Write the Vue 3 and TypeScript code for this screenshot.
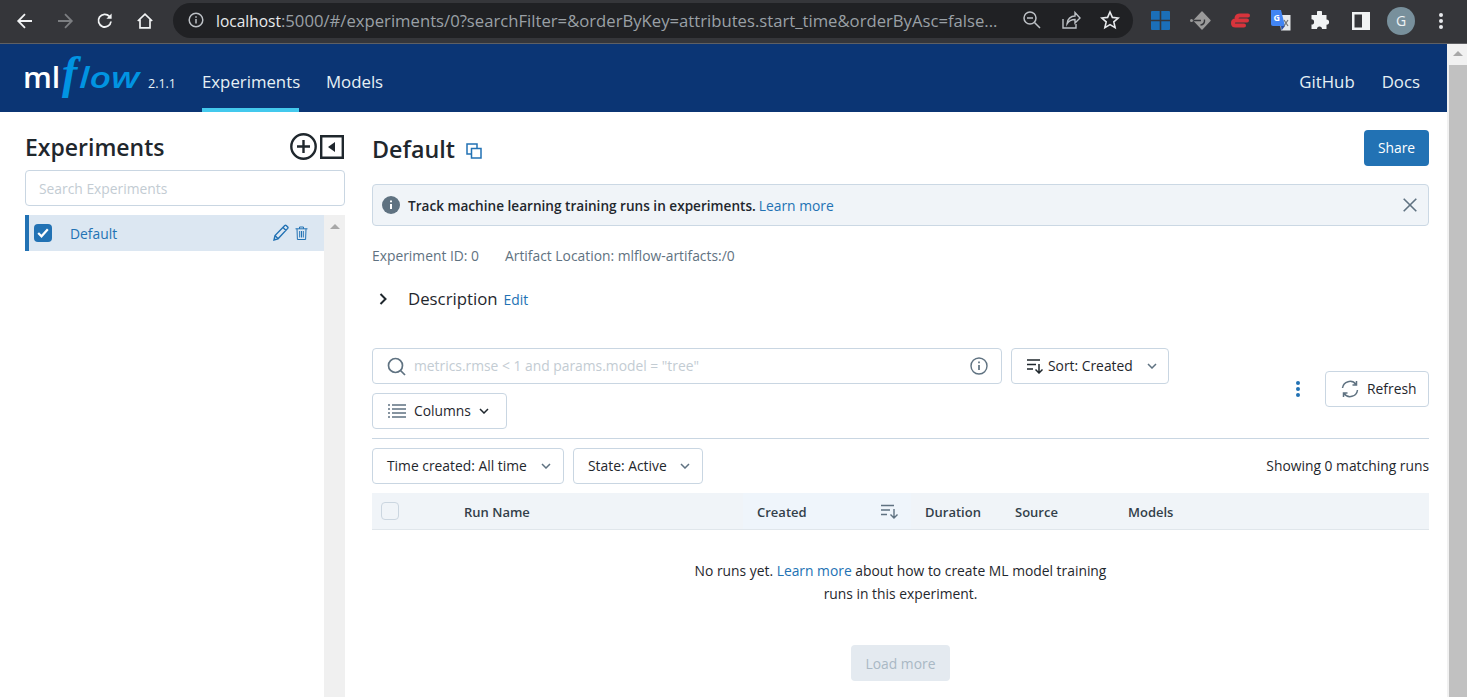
<script setup lang="ts">
const headers: { label: string; width: number; pad: number }[] = [
  { label: 'Duration', width: 90, pad: 14 },
  { label: 'Source', width: 113, pad: 14 },
  { label: 'Models', width: 120, pad: 14 },
]
</script>

<template>
  <div class="window">
    <header class="chrome">
      <button class="cbtn first" aria-label="Back">
        <svg width="18" height="18" viewBox="0 0 18 18" fill="none" stroke="#f1f3f4" stroke-width="1.8"><path d="M16 9H2.500M9 2.200 2.200 9 9 15.800" /></svg>
      </button>
      <button class="cbtn" aria-label="Forward">
        <svg width="18" height="18" viewBox="0 0 18 18" fill="none" stroke="#7c7e81" stroke-width="1.8"><path d="M2 9h13.500M9 2.200 15.800 9 9 15.800" /></svg>
      </button>
      <button class="cbtn" aria-label="Reload">
        <svg width="18" height="18" viewBox="0 0 18 18" fill="none" stroke="#f1f3f4" stroke-width="1.8"><path d="M15 9.500A6.300 6.300 0 1 1 13.400 4.400" /><path d="M15.600 1.600v5.200h-5.200" fill="#f1f3f4" stroke="none" /></svg>
      </button>
      <button class="cbtn" aria-label="Home">
        <svg width="18" height="18" viewBox="0 0 18 18" fill="none" stroke="#f1f3f4" stroke-width="1.7"><path d="M1.800 9 9 2.200 16.200 9M4 7.500v8.300h10V7.500" /></svg>
      </button>
      <div class="omnibox">
        <svg class="omni-info" width="16" height="16" viewBox="0 0 16 16" fill="none" stroke="#bdc1c6" stroke-width="1.5"><circle cx="8" cy="8" r="6.800" /><path d="M8 7v4.600M8 4.200v1.600" /></svg>
        <span class="url"><span class="host">localhost</span>:5000/#/experiments/0?searchFilter=&amp;orderByKey=attributes.start_time&amp;orderByAsc=false...</span>
        <svg class="omni-icon zoomi" width="20" height="20" viewBox="0 0 20 20" fill="none" stroke="#bdc1c6" stroke-width="1.5"><circle cx="8" cy="8" r="6" /><path d="M5 8h6M12.500 12.500 18 18" /></svg>
        <svg class="omni-icon" width="20" height="20" viewBox="0 0 20 20" fill="none" stroke="#bdc1c6" stroke-width="1.4"><path d="M2 9v9h13v-4M6 14c0-5 4-8 8-8V2.500L19 8l-5 5V9.500c-3 0-6 1-8 4.500Z" /></svg>
        <svg class="omni-icon" width="20" height="20" viewBox="0 0 20 20" fill="none" stroke="#e8eaed" stroke-width="1.6"><path d="m10 2 2.400 5.400 5.800.6-4.400 3.900 1.300 5.700-5.100-3-5.100 3 1.300-5.700L1.800 8l5.800-.6Z" /></svg>
      </div>
      <div class="exts">
        <svg width="21" height="21" viewBox="0 0 21 21"><path fill="#1b6fb8" d="M1 2q0-1 1-1h7.700v8.700H1ZM11.300 1H19q1 0 1 1v7.700h-8.700ZM1 11.300h8.700V20H2q-1 0-1-1ZM11.300 11.300H20V19q0 1-1 1h-7.700Z" /></svg>
        <svg width="21" height="21" viewBox="0 0 21 21"><path fill="#9a9a9a" d="M11.500 1.500q.5-.4 1 0l8 8.500q.5.500 0 1l-8 8.500q-.5.400-1 0l-8-8.500q-.5-.5 0-1Z" /><circle cx="1.500" cy="10.500" r="1.500" fill="#9a9a9a" /><path d="M3.500 10.500h7.500M10.500 15q4.500-.5 4-5.500" fill="none" stroke="#35363a" stroke-width="1.400" /></svg>
        <svg width="21" height="21" viewBox="0 0 21 21" fill="none" stroke="#d8343c" stroke-width="4" stroke-linecap="round" stroke-linejoin="round"><path d="M18 5.500H10Q7 5.500 6.500 8M17 10.500H5.500Q3 10.500 3 13 3 15.500 5.500 15.500H14" /></svg>
        <svg width="21" height="21" viewBox="0 0 21 21"><path fill="#e6e8ea" d="M9 5h11.500v15.500H11Z" /><path fill="#4285f4" d="M1 0h10l4 16H3q-2 0-2-2Z" /><path fill="#2c4fa3" d="m11 16 4 0-3.500 4.500Z" /><text x="3.500" y="11" class="g-text">G</text><path d="m14 10 4 6M18 10l-4 6" stroke="#6f7274" stroke-width="1.200" /></svg>
        <svg width="20" height="20" viewBox="0 0 20 20"><path fill="#f1f3f4" d="M7 1.500a2.500 2.500 0 0 1 5 0V4h4.500v4.500a2.600 2.600 0 0 1 0 5.200V18H12a2.500 2.500 0 0 0-5 0H1.500v-4.500a2.600 2.600 0 0 0 0-5.200V4H7Z" /></svg>
        <svg class="panel" width="18" height="18" viewBox="0 0 18 18"><path fill="#f1f3f4" d="M0 0h18v18H0Z" /><path fill="#35363a" d="M2.500 2.500h7.500v13H2.500Z" /></svg>
        <span class="avatar">G</span>
        <svg class="dots" width="4" height="16" viewBox="0 0 4 16" fill="#e8eaed"><circle cx="2" cy="2" r="2" /><circle cx="2" cy="8" r="2" /><circle cx="2" cy="14" r="2" /></svg>
      </div>
    </header>

    <div class="viewport">
      <div class="page">
        <nav class="topnav">
          <a class="logo">
            <span class="ml">ml</span><span class="f">f</span><span class="low">low</span>
            <span class="version">2.1.1</span>
          </a>
          <a class="navlink active">Experiments</a>
          <a class="navlink">Models</a>
          <span class="nav-space"></span>
          <a class="navlink">GitHub</a>
          <a class="navlink">Docs</a>
        </nav>

        <main class="body">
          <aside class="sidebar">
            <div class="side-head">
              <h1 class="side-title">Experiments</h1>
              <svg class="plus" width="27" height="27" viewBox="0 0 27 27" fill="none" stroke="#1f272d" stroke-width="2.400"><circle cx="13.500" cy="13.500" r="12.200" /><path d="M7 13.500h13M13.500 7v13" /></svg>
              <svg class="collapse" width="24" height="24" viewBox="0 0 24 24"><path fill="none" stroke="#1f272d" stroke-width="2.400" d="M1.200 1.200h21.600v21.600H1.200Z" /><path fill="#1f272d" d="M15 7v10l-7-5Z" /></svg>
            </div>
            <div class="side-search">Search Experiments</div>
            <div class="side-list">
              <div class="side-items">
                <div class="side-item">
                  <span class="check">
                    <svg width="12" height="10" viewBox="0 0 12 10" fill="none" stroke="#fff" stroke-width="2.200"><path d="m1.200 5 3.300 3.300 6.300-7" /></svg>
                  </span>
                  <span class="side-name">Default</span>
                  <svg class="pencil" width="16" height="17" viewBox="0 0 16 17" fill="none" stroke="#2272b4" stroke-width="1.400"><path d="M1 16 2 11.500 11.800 1.500q.7-.6 1.400 0l1.500 1.500q.6.700 0 1.400L5 14.800ZM2 11.500 5 14.800M10 3.400l3 3" /></svg>
                  <svg class="trash" width="13" height="14" viewBox="0 0 13 14" fill="none" stroke="#2272b4" stroke-width="1"><path d="M0.500 2.800h12M4.500 2.800V1h4v1.800M2 2.800l.4 10.700h8.200l.4-10.700M4.700 5v6.500M6.500 5v6.500M8.300 5v6.500" /></svg>
                </div>
              </div>
              <div class="side-scroll"><span class="tri"></span></div>
            </div>
          </aside>

          <section class="content">
            <div class="title-row">
              <h2 class="exp-title">Default</h2>
              <svg class="copy" width="16" height="16" viewBox="0 0 16 16" fill="none" stroke="#2272b4" stroke-width="1.500"><path d="M5.500 5.500h9.500v9.500H5.500ZM5 11H1V1h10v4" /></svg>
              <button class="share">Share</button>
            </div>

            <div class="banner">
              <svg width="18" height="18" viewBox="0 0 18 18"><circle cx="9" cy="9" r="9" fill="#5f7281" /><path d="M9 8v5M9 4.500v1.800" stroke="#fff" stroke-width="2" /></svg>
              <span class="banner-text">Track machine learning training runs in experiments.</span>
              <a class="link">Learn more</a>
              <svg class="close" width="14" height="14" viewBox="0 0 14 14" fill="none" stroke="#5f7281" stroke-width="1.600"><path d="m.7.700 12.600 12.600M13.300.700.700 13.300" /></svg>
            </div>

            <div class="meta"><span>Experiment ID: 0</span><span>Artifact Location: mlflow-artifacts:/0</span></div>

            <div class="desc">
              <svg width="9" height="12" viewBox="0 0 9 12" fill="none" stroke="#1f272d" stroke-width="2"><path d="m1.500 1 5 5-5 5" /></svg>
              <span class="desc-label">Description</span>
              <a class="link edit">Edit</a>
            </div>

            <div class="controls">
              <div class="control-left">
                <div class="box searchbox">
                  <svg width="19" height="19" viewBox="0 0 19 19" fill="none" stroke="#5f7281" stroke-width="1.700"><circle cx="8.500" cy="8.500" r="7" /><path d="m13.500 13.500 4.500 4.500" /></svg>
                  <span class="placeholder">metrics.rmse &lt; 1 and params.model = "tree"</span>
                  <svg class="hint" width="18" height="18" viewBox="0 0 18 18" fill="none" stroke="#5f7281" stroke-width="1.400"><circle cx="9" cy="9" r="8" /><path d="M9 8v5M9 4.500v1.800" stroke-width="1.700" /></svg>
                </div>
                <div class="box sort">
                  <svg width="17" height="16" viewBox="0 0 17 16" fill="none" stroke="#1f272d" stroke-width="1.500"><path d="M0 2h13M0 6.500h9M0 11h6M12 6v9M8.500 11.500 12 15l3.500-3.500" /></svg>
                  <span>Sort: Created</span>
                  <svg class="chev" width="10" height="6" viewBox="0 0 10 6" fill="none" stroke="#5f7281" stroke-width="1.500"><path d="m1 1 4 4 4-4" /></svg>
                </div>
                <div class="box columns">
                  <svg width="18" height="14" viewBox="0 0 18 14" fill="none" stroke="#5f7281" stroke-width="1.400"><path d="M0 1h2M0 5h2M0 9h2M0 13h2M4 1h14M4 5h14M4 9h14M4 13h14" /></svg>
                  <span>Columns</span>
                  <svg class="chev" width="10" height="6" viewBox="0 0 10 6" fill="none" stroke="#1f272d" stroke-width="1.500"><path d="m1 1 4 4 4-4" /></svg>
                </div>
              </div>
              <svg class="kebab" width="4" height="16" viewBox="0 0 4 16" fill="#2272b4"><circle cx="2" cy="2" r="2" /><circle cx="2" cy="8" r="2" /><circle cx="2" cy="14" r="2" /></svg>
              <div class="box refresh">
                <svg width="18" height="18" viewBox="0 0 18 18" fill="none" stroke="#5f7281" stroke-width="1.500"><path d="M1.500 8A7.500 7.500 0 0 1 15 4.500M16.500 10A7.500 7.500 0 0 1 3 13.500M15.500 1v4h-4M2.500 17v-4h4" /></svg>
                <span>Refresh</span>
              </div>
            </div>

            <div class="filters">
              <div class="box filter time"><span>Time created: All time</span><svg class="chev" width="10" height="6" viewBox="0 0 10 6" fill="none" stroke="#5f7281" stroke-width="1.500"><path d="m1 1 4 4 4-4" /></svg></div>
              <div class="box filter state"><span>State: Active</span><svg class="chev" width="10" height="6" viewBox="0 0 10 6" fill="none" stroke="#5f7281" stroke-width="1.500"><path d="m1 1 4 4 4-4" /></svg></div>
              <span class="count">Showing 0 matching runs</span>
            </div>

            <div class="thead">
              <div class="th-select"><span class="th-check"></span></div>
              <div class="th-name">Run Name</div>
              <div class="th-created">
                <span>Created</span>
                <svg width="18" height="15" viewBox="0 0 18 15" fill="none" stroke="#5f7281" stroke-width="1.400"><path d="M0 1.500h13M0 6h9M0 10.500h6M13 5v9M9.500 10.500 13 14l3.500-3.500" /></svg>
              </div>
              <div v-for="h in headers" :key="h.label" class="th" :style="{ width: h.width + 'px', paddingLeft: h.pad + 'px' }">{{ h.label }}</div>
            </div>

            <div class="empty">
              <p>No runs yet. <a class="link">Learn more</a> about how to create ML model training runs in this experiment.</p>
            </div>
            <div class="more"><button class="load">Load more</button></div>
          </section>
        </main>
      </div>
      <div class="vscroll">
        <span class="vtri"></span>
        <span class="vthumb"></span>
      </div>
    </div>
  </div>
</template>

<style>
html, body { margin: 0; height: 100%; overflow: hidden; background: #fff; }
</style>

<style scoped>
* { box-sizing: border-box; }
.window { height: 697px; display: flex; flex-direction: column; font-family: "Open Sans", "Liberation Sans", sans-serif; font-size: 13.850px; color: #1f272d; overflow: hidden; }
.chrome { height: 44px; flex: none; background: #35363a; border-bottom: 1px solid #5f6063; display: flex; align-items: center; padding-bottom: 2px; }
.cbtn { width: 18px; height: 18px; padding: 0; margin-left: 22px; background: none; border: 0; display: flex; }
.cbtn.first { margin-left: 16px; }
.omnibox { width: 960px; height: 35px; margin-left: 19px; margin-top: -1px; background: #202124; border-radius: 18px; display: flex; align-items: center; padding-left: 15px; }
.omni-info { flex: none; }
.url { margin-left: 12px; width: 783px; font-family: "Open Sans", "Liberation Sans", sans-serif; font-size: 16.680px; color: #9aa0a6; white-space: nowrap; overflow: hidden; }
.host { color: #e8eaed; font-size: 15.500px; }
.omni-icon { flex: none; margin-left: 19px; }
.omni-icon.zoomi { margin-left: 23px; }
.exts { display: flex; align-items: center; margin-left: 17px; gap: 19px; }
.g-text { font-family: "Open Sans", sans-serif; font-size: 9px; font-weight: 700; fill: #fff; }
.panel { margin-left: 3px; }
.avatar { width: 28px; height: 28px; border-radius: 50%; background: #78909c; color: #eef2f4; font-size: 14px; display: flex; align-items: center; justify-content: center; margin-left: -2px; }
.dots { margin-left: 5px; }
.viewport { flex: 1; display: flex; min-height: 0; }
.page { flex: 1; min-width: 0; display: flex; flex-direction: column; }
.topnav { height: 68px; flex: none; background: #0b3574; display: flex; align-items: stretch; color: #fff; padding-left: 25px; padding-right: 27px; }
.logo { width: 177px; display: flex; align-items: baseline; padding-top: 13px; white-space: nowrap; line-height: 32px; }
.ml { display: inline-block; width: 37px; margin-left: -2px; margin-right: 2px; font-size: 28px; font-weight: 600; color: #fff; transform: scaleX(1.080); transform-origin: left; }
.f { display: inline-block; width: 17px; font-family: "Liberation Serif", serif; font-style: italic; font-weight: 700; font-size: 46px; color: #0194e2; line-height: 32px; }
.low { display: inline-block; width: 62px; font-style: italic; font-weight: 600; font-size: 28px; color: #0194e2; transform: scaleX(1.350); transform-origin: left; }
.version { font-size: 12.500px; margin-left: 7px; color: #e6f1f5; }
.navlink { font-size: 16.800px; line-height: 76px; height: 68px; color: #e6f1f5; margin-right: 27px; }
.navlink.active { border-bottom: 4px solid #43c9ed; width: 97px; white-space: nowrap; }
.navlink:last-child { margin-right: 0; }
.nav-space { flex: 1; }
.body { flex: 1; min-height: 0; display: flex; padding-left: 25px; padding-right: 18px; }
.sidebar { width: 320px; flex: none; display: flex; flex-direction: column; padding-top: 20px; }
.side-head { height: 28px; display: flex; align-items: center; }
.side-title { margin: 1px 0 0; flex: 1; font-size: 23px; font-weight: 600; color: #1f272d; line-height: 28px; }
.plus { flex: none; }
.collapse { flex: none; margin: 1px 1px 0 3px; }
.side-search { height: 36px; margin-top: 10px; border: 1px solid #c9d6e2; border-radius: 4px; padding-left: 13px; line-height: 35px; color: #c3ccd3; }
.side-list { flex: 1; display: flex; margin-top: 9px; min-height: 0; }
.side-items { flex: 1; }
.side-item { height: 36px; background: #dce7f2; border-left: 4px solid #2272b4; display: flex; align-items: center; padding-left: 5px; }
.check { width: 18px; height: 18px; background: #2272b4; border-radius: 4px; display: flex; align-items: center; justify-content: center; }
.side-name { flex: 1; margin-left: 18px; color: #2272b4; }
.pencil { flex: none; margin-bottom: 2px; }
.trash { flex: none; margin: 0 16px 0 6px; }
.side-scroll { width: 21px; background: #f0f0f0; display: flex; justify-content: center; padding-top: 9px; }
.tri { width: 0; height: 0; border: 5px solid transparent; border-top: 0; border-bottom: 5px solid #a8a8a8; }
.content { flex: 1; min-width: 0; margin-left: 27px; display: flex; flex-direction: column; }
.title-row { height: 36px; margin-top: 18px; display: flex; align-items: center; }
.exp-title { margin: 1px 0 0; font-size: 23.300px; font-weight: 600; line-height: 36px; color: #1f272d; }
.copy { margin: 5px 0 0 11px; }
.share { margin-left: auto; width: 65px; height: 36px; background: #2272b4; border: 0; border-radius: 4px; color: #fff; font: inherit; padding: 0 0 2px; }
.banner { height: 42px; margin-top: 18px; background: #f0f4f8; border: 1px solid #cbd8e4; border-radius: 4px; display: flex; align-items: center; padding-left: 9px; }
.banner-text { margin-left: 8px; font-size: 13.600px; font-weight: 600; color: #1f272d; }
.link { color: #2272b4; }
.banner .link { margin-left: 3px; }
.close { margin-left: auto; margin-right: 11px; }
.meta { margin-top: 20px; height: 20px; line-height: 20px; color: #5f7281; display: flex; gap: 26px; }
.desc { margin-top: 21px; height: 24px; display: flex; align-items: center; padding-left: 7px; }
.desc-label { margin: -1px 0 0 20px; font-size: 16.800px; color: #1f272d; }
.edit { margin-left: 6px; margin-top: 1px; }
.controls { margin-top: 37px; height: 91px; border-bottom: 1px solid #c9d6e2; display: flex; }
.control-left { width: 800px; display: flex; flex-wrap: wrap; gap: 9px; align-content: flex-start; }
.box { height: 36px; border: 1px solid #c9d6e2; border-radius: 4px; display: flex; align-items: center; background: #fff; color: #1f272d; }
.box span, .count { padding-bottom: 2px; }
.searchbox { width: 630px; padding: 0 13px 0 14px; }
.placeholder { margin-left: 8px; flex: 1; color: #c3ccd3; }
.hint { flex: none; }
.sort { width: 158px; padding: 0 11px 0 15px; }
.sort span { margin-left: 4px; flex: 1; }
.columns { width: 135px; padding-left: 15px; }
.columns span { margin: 0 8px 0 8px; }
.kebab { margin: 33px 0 0 124px; flex: none; }
.refresh { width: 104px; margin: 23px 0 0 auto; height: 36px; padding-left: 15px; }
.refresh span { margin-left: 8px; }
.filters { margin-top: 9px; display: flex; gap: 9px; align-items: center; height: 36px; }
.filter { padding: 0 12px 0 14px; justify-content: space-between; }
.time { width: 192px; }
.state { width: 130px; }
.count { margin-left: auto; }
.thead { margin-top: 9px; height: 37px; background: #f0f4f8; border-bottom: 1px solid #e0e6eb; display: flex; align-items: center; font-weight: 600; font-size: 13px; color: #333f4a; }
.th-select { width: 92px; padding-left: 9px; display: flex; }
.th-check { width: 18px; height: 18px; border: 1px solid #cbd6e0; border-radius: 4px; background: #f0f4f8; }
.th-name { width: 279px; padding-top: 2px; }
.th { padding-top: 2px; }
.th-created { width: 168px; height: 36px; background: #eff5fb; display: flex; align-items: center; justify-content: space-between; padding: 0 12px 0 14px; }
.th-created span { padding-top: 2px; }
.empty { margin: 29px auto 0; width: 430px; text-align: center; line-height: 23px; }
.empty p { margin: 0; }
.more { margin-top: 40px; display: flex; justify-content: center; }
.load { width: 99px; height: 36px; border: 0; border-radius: 4px; background: #e4eaf0; color: #a9b8c4; font: inherit; padding: 0; }
.vscroll { width: 20px; flex: none; background: #f1f1f1; display: flex; flex-direction: column; align-items: center; padding-top: 7px; }
.vtri { width: 0; height: 0; border: 5px solid transparent; border-top: 0; border-bottom: 5px solid #a8a8a8; margin-left: 1px; }
.vthumb { flex: 1; align-self: flex-end; width: 18px; margin-top: 9px; background: #c1c1c1; }
</style>
